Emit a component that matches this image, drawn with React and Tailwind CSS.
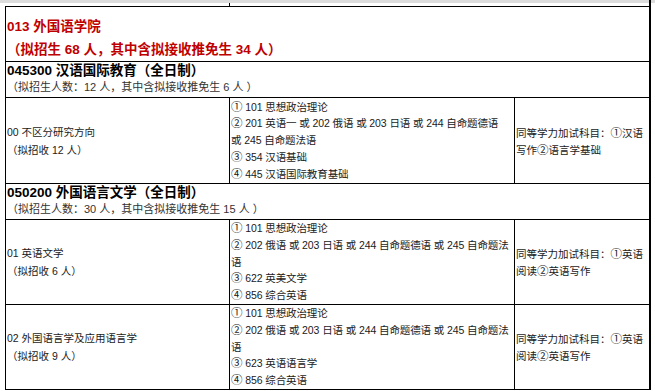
import React from 'react';

const font = { fontFamily: '"Liberation Sans", "Noto Sans CJK SC", sans-serif' };

const programs = [
    {
        code: '045300 汉语国际教育（全日制）',
        quota: '（拟招生人数：12 人，其中含拟接收推免生 6 人 ）',
        rows: [
            {
                name: '00 不区分研究方向',
                plan: '（拟招收 12 人）',
                height: 'h-[86px]',
                exams: [
                    '① 101 思想政治理论',
                    '② 201 英语一 或 202 俄语 或 203 日语 或 244 自命题德语',
                    '或 245 自命题法语',
                    '③ 354 汉语基础',
                    '④ 445 汉语国际教育基础',
                ],
                extra: ['同等学力加试科目：①汉语', '写作②语言学基础'],
            },
        ],
    },
    {
        code: '050200 外国语言文学（全日制）',
        quota: '（拟招生人数：30 人，其中含拟接收推免生 15 人 ）',
        rows: [
            {
                name: '01 英语文学',
                plan: '（拟招收 6 人）',
                height: 'h-[85px]',
                exams: [
                    '① 101 思想政治理论',
                    '② 202 俄语 或 203 日语 或 244 自命题德语 或 245 自命题法',
                    '语',
                    '③ 622 英美文学',
                    '④ 856 综合英语',
                ],
                extra: ['同等学力加试科目：①英语', '阅读②英语写作'],
            },
            {
                name: '02 外国语言学及应用语言学',
                plan: '（拟招收 9 人）',
                height: 'h-[85px]',
                exams: [
                    '① 101 思想政治理论',
                    '② 202 俄语 或 203 日语 或 244 自命题德语 或 245 自命题法',
                    '语',
                    '③ 623 英语语言学',
                    '④ 856 综合英语',
                ],
                extra: ['同等学力加试科目：①英语', '阅读②英语写作'],
            },
        ],
    },
];

// circled digits come out tiny at body size, so bump them up a little
const Line = ({ text }) => (
    <div className="whitespace-nowrap">
        {text.split(/([①②③④])/).map((part, i) =>
            /[①②③④]/.test(part) ? (
                <span key={i} className="font-['Noto_Sans_CJK_SC'] text-[11.5px] leading-none">{part}</span>
            ) : (
                part
            )
        )}
    </div>
);

const DirectionRow = ({ row }) => (
    <div className={`flex border-b border-black ${row.height}`}>
        {/* direction name */}
        <div className="w-[224px] border-r border-black flex flex-col justify-center pl-[1px] leading-[18px]">
            <div className="whitespace-nowrap">{row.name}</div>
            <div className="whitespace-nowrap">{row.plan}</div>
        </div>
        {/* exam subjects */}
        <div className="w-[285px] border-r border-black flex flex-col justify-center pl-[1px] leading-[16.75px] tracking-[-0.1px]">
            {row.exams.map((line, i) => (
                <Line key={i} text={line} />
            ))}
        </div>
        {/* notes */}
        <div className="flex-1 flex flex-col justify-center pl-[1px] pt-[2px] leading-[17px]">
            {row.extra.map((line, i) => (
                <Line key={i} text={line} />
            ))}
        </div>
    </div>
);

export default function App() {
    return (
        <div className="w-[655px] h-[391px] bg-white overflow-hidden text-[10.5px] text-[#1a1a1a]" style={font}>
            {/* gray strip from the previous page */}
            <div className="h-[3px] bg-[#dcdcdc] flex">
                <div className="ml-[649px] w-[2px] bg-black" />
            </div>
            <div className="ml-[5px] w-[646px] h-[3px] flex">
                <div className="w-[225px] border-r border-black" />
                <div className="flex-1 border-r-2 border-black" />
            </div>

            {/* table */}
            <div className="ml-[5px] w-[646px] border-t border-l border-r-2 border-black">
                <div className="h-[55px] border-b border-black pt-[8px] pl-[1px] text-[13.5px] font-bold text-[#c00000] leading-[23px]">
                    <div>013 外国语学院</div>
                    <div>（拟招生 68 人，其中含拟接收推免生 34 人）</div>
                </div>

                {programs.map((p) => (
                    <React.Fragment key={p.code}>
                        <div className="h-[36px] border-b border-black pl-[1px] leading-[17px]">
                            <div className="text-[13.5px] font-bold text-black whitespace-nowrap">{p.code}</div>
                            <div className="text-[11px] text-[#333] whitespace-nowrap">{p.quota}</div>
                        </div>
                        {p.rows.map((row) => (
                            <DirectionRow key={row.name} row={row} />
                        ))}
                    </React.Fragment>
                ))}
            </div>
        </div>
    );
}
